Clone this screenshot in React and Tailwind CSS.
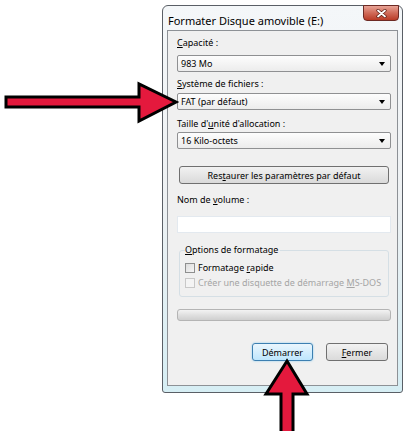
import React from "react";

const font = { fontFamily: '"Noto Sans", "Open Sans", sans-serif' };

function Combo({ text }) {
  return (
    <div className="h-[17px] w-[214px] border border-[#8f9092] rounded-[2px] bg-gradient-to-b from-[#fdfdfd] to-[#ececec] flex items-center justify-between pl-[3px] pr-[5px]">
      <span className="text-[9px] leading-none text-black">{text}</span>
      <span className="w-0 h-0 border-l-[3px] border-r-[3px] border-t-[4px] border-l-transparent border-r-transparent border-t-black" />
    </div>
  );
}

function Btn({ children, w, primary }) {
  return (
    <div className={`h-[18px] ${w} rounded-[3px] border flex items-center justify-center text-[9px] leading-none text-black whitespace-nowrap ${primary ? "border-[#3c7fb1] bg-gradient-to-b from-[#eaf6fd] to-[#bee6fd] shadow-[0_0_2px_#7fc8f0]" : "border-[#707070] bg-gradient-to-b from-[#f2f2f2] to-[#dadada]"}`}>
      {children}
    </div>
  );
}

function Check({ children, disabled }) {
  return (
    <div className="flex items-center gap-[3px] h-[15px]">
      <span className={`w-[10px] h-[10px] shrink-0 border ${disabled ? "border-[#c8c8c8] bg-[#f4f4f4]" : "border-[#8e8f8f] bg-gradient-to-br from-[#dcdcdc] to-[#f6f6f6]"}`} />
      <span className={`text-[9px] leading-none whitespace-nowrap ${disabled ? "text-[#a5a5a5]" : "text-black"}`}>{children}</span>
    </div>
  );
}

export default function App() {
  return (
    <div className="relative w-[409px] h-[431px] bg-white overflow-hidden" style={font}>
      {/* Window */}
      <div className="ml-[162px] pt-[5px]">
        <div className="w-[241px] h-[388px] rounded-t-[6px] rounded-b-[3px] border border-[#5a5f66] bg-gradient-to-b from-[#f4f7f9] via-[#eef1f3] to-[#d6eef4] px-[4px] pb-[6px] flex flex-col">
          {/* title bar */}
          <div className="h-[24px] flex items-start justify-between">
            <span className="text-[11px] leading-none text-black pt-[9px] pl-[1px]">Formater Disque amovible (E:)</span>
            <div className="w-[36px] h-[16px] -mt-[1px] mr-[-1px] rounded-b-[4px] border border-[#6d2a24] bg-gradient-to-b from-[#e8a396] via-[#d06a58] to-[#b93a25] flex items-center justify-center">
              <svg width="11" height="9" viewBox="0 0 11 9">
                <path d="M2 1.5 L9 7.5 M9 1.5 L2 7.5" stroke="#5a1a10" strokeWidth="3.2" strokeLinecap="round" />
                <path d="M2 1.5 L9 7.5 M9 1.5 L2 7.5" stroke="#fff" strokeWidth="1.8" strokeLinecap="round" />
              </svg>
            </div>
          </div>
          {/* client */}
          <div className="flex-1 border border-[#8d9196] bg-[#f0f0f0] pl-[9px] pr-[7px] pt-[5px] flex flex-col">
            <span className="text-[9px] leading-[14px] text-black"><u>C</u>apacité :</span>
            <div className="mt-[5px]"><Combo text="983 Mo" /></div>
            <span className="text-[9px] leading-[14px] text-black mt-[5px]"><u>S</u>ystème de fichiers :</span>
            <div className="mt-[2px]"><Combo text="FAT (par défaut)" /></div>
            <span className="text-[9px] leading-[14px] text-black mt-[7px]">Taille d'<u>u</u>nité d'allocation :</span>
            <div className="mt-[1px]"><Combo text="16 Kilo-octets" /></div>
            <div className="mt-[17px] ml-[2px]">
              <Btn w="w-[210px]">Res<u>t</u>aurer les paramètres par défaut</Btn>
            </div>
            <span className="text-[9px] leading-[14px] text-black mt-[9px]">Nom de <u>v</u>olume :</span>
            <div className="mt-[9px] h-[17px] w-[214px] bg-white border border-[#e3e9ef]" />
            {/* group box */}
            <div className="mt-[17px] ml-[2px] w-[210px] h-[47px] border border-[#d5dfe5] rounded-[3px] flex flex-col pl-[5px]">
              <span className="text-[9px] leading-none text-black -mt-[6px] bg-[#f0f0f0] self-start pr-[2px]"><u>O</u>ptions de formatage</span>
              <div className="mt-[6px] flex flex-col">
                <Check>Formatage <u>r</u>apide</Check>
                <Check disabled>Créer une disquette de démarrage <u>M</u>S-DOS</Check>
              </div>
            </div>
            {/* progress */}
            <div className="mt-[12px] h-[12px] w-[214px] rounded-[3px] border border-[#b4b4b4] bg-gradient-to-b from-[#f3f3f3] via-[#e0e0e0] to-[#cfcfcf]" />
            <div className="mt-[22px] flex justify-end gap-[13px] pr-[2px]">
              <Btn w="w-[61px]" primary>Démarrer</Btn>
              <Btn w="w-[62px]"><u>F</u>ermer</Btn>
            </div>
          </div>
        </div>
      </div>

      {/* left arrow */}
      <svg className="absolute left-0 top-[80px]" width="182" height="46" viewBox="0 80 182 46">
        <polygon points="6,97 139,97 139,84 176,102 139,121 139,107 6,107" fill="#e4193d" stroke="#000" strokeWidth="3" strokeLinejoin="miter" />
      </svg>
      {/* up arrow */}
      <svg className="absolute left-[262px] top-[358px]" width="50" height="73" viewBox="262 358 50 73">
        <polygon points="287,361 307,394 293,394 293,434 281,434 281,394 266,394" fill="#e4193d" stroke="#000" strokeWidth="3" strokeLinejoin="miter" />
      </svg>
    </div>
  );
}
